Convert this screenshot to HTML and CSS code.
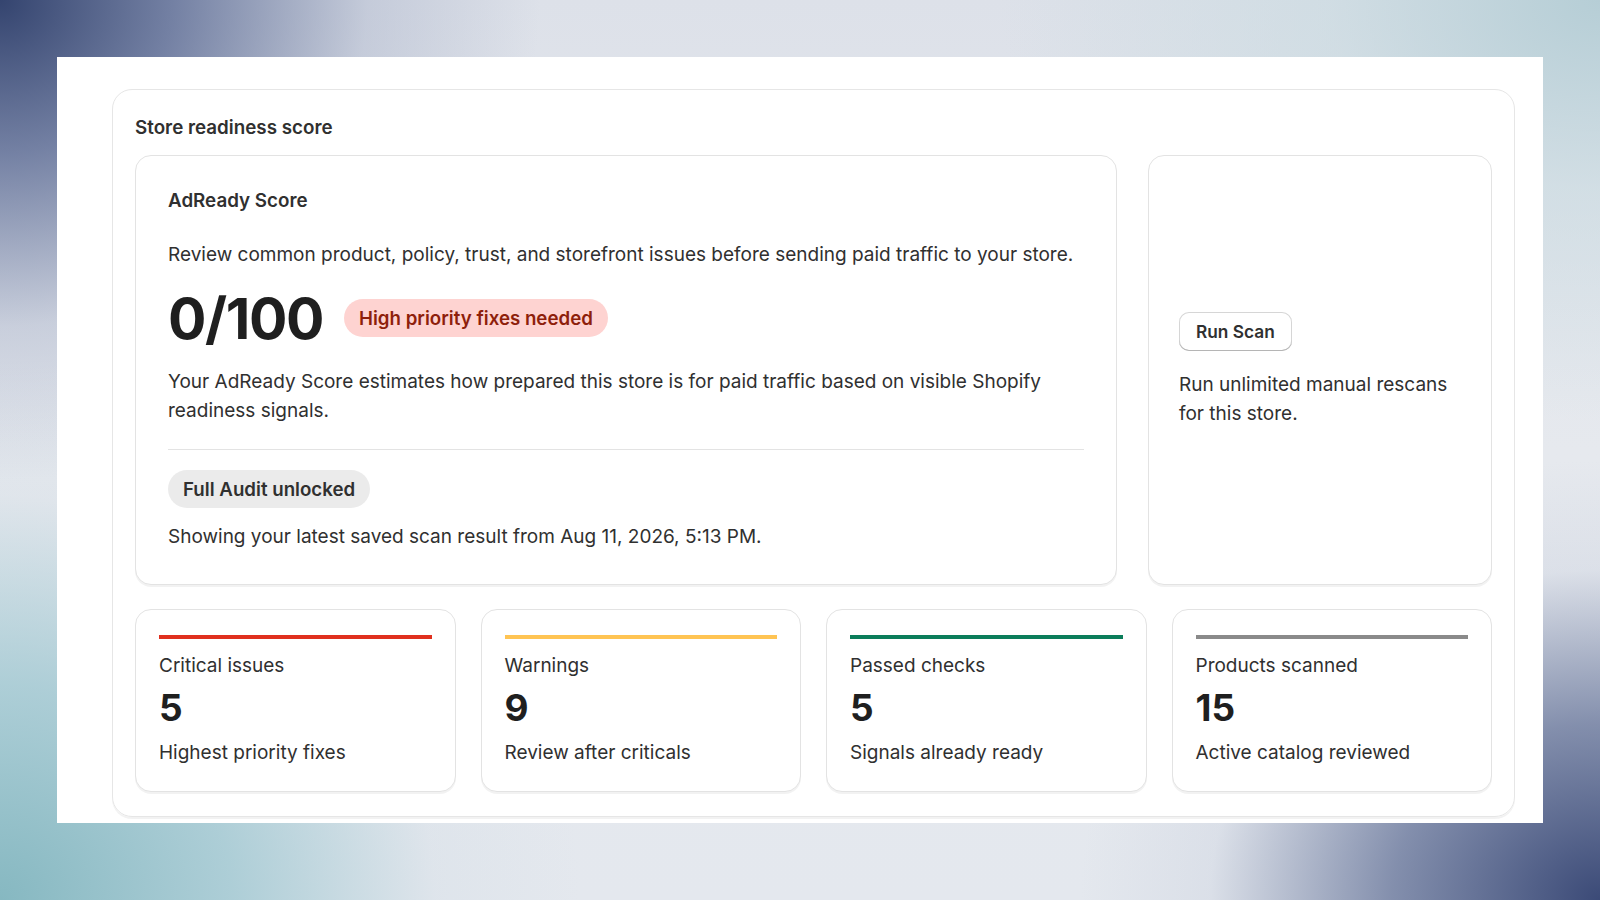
FILE: index.html
```html
<!DOCTYPE html>
<html lang="en">
<head>
<meta charset="utf-8">
<title>Store readiness score</title>
<link rel="stylesheet" href="styles.css">
</head>
<body>
<div class="stage">
  <div class="shot">
    <section class="outer-card">
      <h2 class="section-title">Store readiness score</h2>
      <div class="top-row">
        <div class="card score-card">
          <h3 class="card-title">AdReady Score</h3>
          <p class="text intro">Review common product, policy, trust, and storefront issues before sending paid traffic to your store.</p>
          <div class="score-row">
            <span class="score">0/100</span>
            <span class="badge-critical">High priority fixes needed</span>
          </div>
          <p class="text explain">Your AdReady Score estimates how prepared this store is for paid traffic based on visible Shopify readiness signals.</p>
          <hr class="divider">
          <div class="pill-row"><span class="pill">Full Audit unlocked</span></div>
          <p class="text saved">Showing your latest saved scan result from Aug 11, 2026, 5:13 PM.</p>
        </div>
        <div class="card scan-card">
          <div class="scan-inner">
            <button class="btn" type="button">Run Scan</button>
            <p class="text scan-text">Run unlimited manual rescans for this store.</p>
          </div>
        </div>
      </div>
      <div class="stats">
        <div class="card stat">
          <div class="bar bar-red"></div>
          <div class="stat-label">Critical issues</div>
          <div class="stat-num">5</div>
          <div class="stat-sub">Highest priority fixes</div>
        </div>
        <div class="card stat">
          <div class="bar bar-yellow"></div>
          <div class="stat-label">Warnings</div>
          <div class="stat-num">9</div>
          <div class="stat-sub">Review after criticals</div>
        </div>
        <div class="card stat">
          <div class="bar bar-green"></div>
          <div class="stat-label">Passed checks</div>
          <div class="stat-num">5</div>
          <div class="stat-sub">Signals already ready</div>
        </div>
        <div class="card stat">
          <div class="bar bar-grey"></div>
          <div class="stat-label">Products scanned</div>
          <div class="stat-num">15</div>
          <div class="stat-sub">Active catalog reviewed</div>
        </div>
      </div>
    </section>
  </div>
</div>
</body>
</html>
```

FILE: styles.css
```css
* { box-sizing: border-box; }

html, body {
  margin: 0;
  padding: 0;
  width: 1600px;
  height: 900px;
  overflow: hidden;
}

body {
  font-family: Inter, "Noto Sans", "Liberation Sans", sans-serif;
  color: #303030;
  background-color: #e6e9ef;
  background-image:
    radial-gradient(ellipse 540px 480px at 0 0, #34446f 0%, rgba(80,96,140,0.75) 32%, rgba(160,170,195,0.4) 68%, rgba(230,233,239,0) 100%),
    radial-gradient(ellipse 520px 440px at 100% 100%, #3b4a77 0%, rgba(90,105,145,0.7) 40%, rgba(190,198,215,0.25) 75%, rgba(230,233,239,0) 100%),
    radial-gradient(ellipse 580px 540px at 0 100%, #86b8c1 0%, rgba(150,195,205,0.7) 40%, rgba(200,215,225,0.2) 75%, rgba(220,230,235,0) 100%),
    radial-gradient(ellipse 600px 420px at 100% 0, #b6ced6 0%, rgba(200,218,224,0.6) 45%, rgba(230,233,239,0) 100%),
    linear-gradient(180deg, #dde1e9 0%, #e6e9ee 50%, #e4e8ee 100%);
}

.stage {
  padding: 57px;
  height: 900px;
}

.shot {
  width: 1486px;
  height: 766px;
  background: #ffffff;
  padding: 32px 28px 7px 55px;
  overflow: hidden;
}

.outer-card {
  border: 1px solid #e6e6e6;
  border-radius: 20px;
  box-shadow: 0 2px 0 rgba(0,0,0,0.05);
  padding: 23px 22px 24px 22px;
}

.section-title {
  margin: 0;
  font-size: 18.8px;
  font-weight: 600;
  line-height: 30px;
}

.top-row {
  margin-top: 12px;
  display: grid;
  grid-template-columns: 982px 1fr;
  gap: 31px;
}

.card {
  background: #fff;
  border: 1px solid #e3e3e3;
  border-radius: 16px;
  box-shadow: 0 2px 0 rgba(0,0,0,0.05);
}

.score-card {
  padding: 33px 32px 33px 32px;
  display: flex;
  flex-direction: column;
}

.card-title {
  margin: 0;
  font-size: 18.8px;
  font-weight: 600;
  line-height: 24px;
}

.text {
  margin: 0;
  font-size: 19px;
  line-height: 29px;
}

.intro { margin-top: 27px; }

.score-row {
  margin-top: 19px;
  display: flex;
  align-items: center;
  gap: 21px;
  height: 60px;
}

.score {
  font-size: 57px;
  font-weight: 700;
  line-height: 1;
  letter-spacing: -1.4px;
  color: #1f1f1f;
}

.badge-critical {
  display: inline-flex;
  align-items: center;
  height: 38px;
  padding: 0 15px;
  border-radius: 19px;
  background: #fed3d1;
  color: #8e1f0b;
  font-size: 18.7px;
  font-weight: 600;
}

.explain { margin-top: 19px; }

.divider {
  margin: 24px 0 0 0;
  border: 0;
  border-top: 1px solid #e3e3e3;
  height: 0;
}

.pill-row { margin-top: 20px; display: flex; }

.pill {
  display: inline-flex;
  align-items: center;
  height: 38px;
  padding: 0 15px;
  border-radius: 19px;
  background: #ebebeb;
  color: #303030;
  font-size: 18.7px;
  font-weight: 600;
}

.saved { margin-top: 14px; }

.scan-card {
  display: flex;
  align-items: center;
  padding: 0 30px;
}

.scan-inner { display: flex; flex-direction: column; align-items: flex-start; }

.btn {
  font-family: inherit;
  height: 39px;
  padding: 0 17px;
  border-radius: 10px;
  background: #fff;
  border: 0;
  box-shadow: inset 0 -1px 0 #b5b5b5, inset 0 0 0 1px #d6d6d6;
  color: #303030;
  font-size: 17.3px;
  font-weight: 600;
  cursor: pointer;
}

.scan-text { margin-top: 19px; }

.stats {
  margin-top: 24px;
  display: grid;
  grid-template-columns: repeat(4, 1fr);
  gap: 25px;
}

.stat {
  padding: 24px 23px 24px 23px;
  height: 183px;
}

.bar { height: 4px; margin-top: 1px; }
.bar-red { background: #e0301e; }
.bar-yellow { background: #ffc453; }
.bar-green { background: #0b7d5a; }
.bar-grey { background: #8a8a8a; }

.stat-label {
  margin-top: 12px;
  font-size: 19px;
  line-height: 29px;
}

.stat-num {
  margin-top: 9px;
  font-size: 37px;
  font-weight: 700;
  line-height: 38px;
  color: #1f1f1f;
}

.stat-sub {
  margin-top: 11px;
  font-size: 19px;
  line-height: 29px;
}
```
